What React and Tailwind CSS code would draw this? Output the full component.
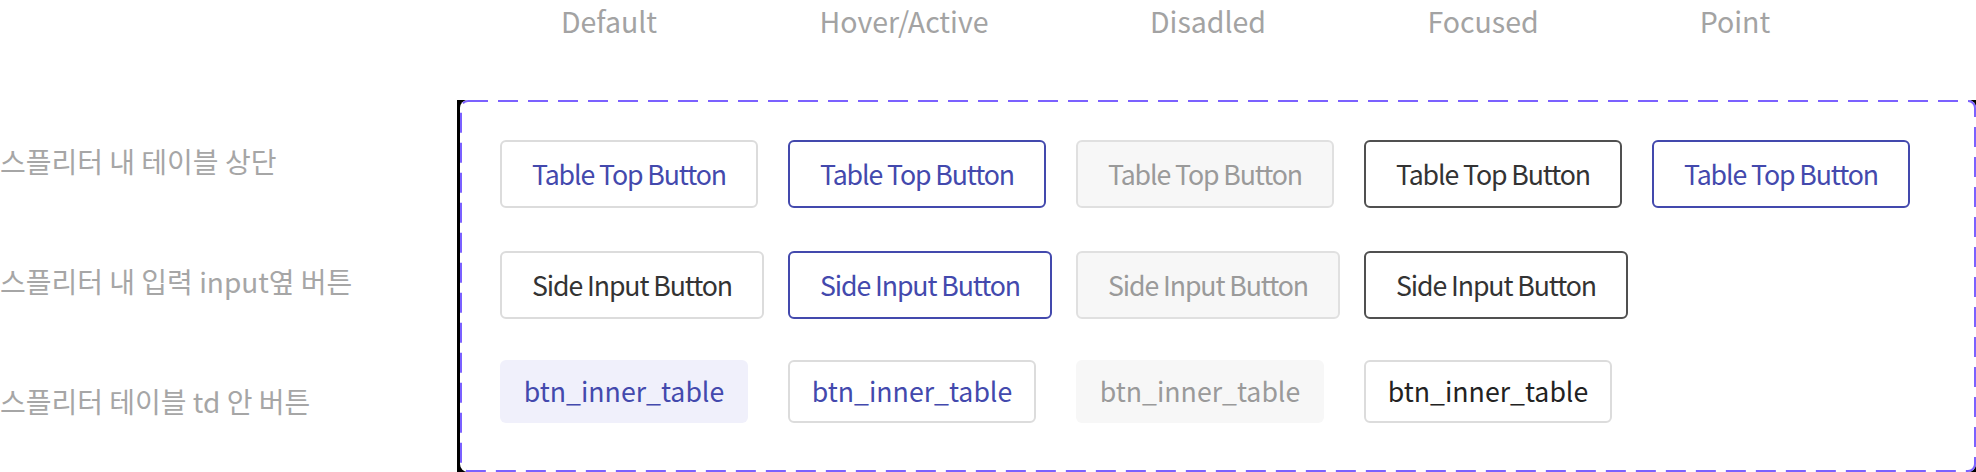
import React from "react";

const BLUE = "text-[#4349ad]";

function Btn({ w, h, cls, track, children }) {
  return (
    <div
      className={`${w} ${h} ${cls} ${track} rounded-[6px] flex items-center justify-center text-[26.7px] leading-none whitespace-nowrap`}
    >
      {children}
    </div>
  );
}

function Cell({ children }) {
  return <div className="w-[288px] shrink-0">{children}</div>;
}

export default function App() {
  const r1 = "w-[258px]";
  const r2 = "w-[264px]";
  const r3 = "w-[248px]";
  const t = "tracking-[-1.1px]";
  return (
    <div className="w-[1976px] h-[472px] bg-white overflow-hidden font-['Noto_Sans_CJK_KR','Noto_Sans',sans-serif]">
      <div className="h-[100px] flex text-[28.5px] leading-normal text-[#a3a3a3]">
        <div className="ml-[509px] w-[200px] text-center">Default</div>
        <div className="ml-[95px] w-[200px] text-center">Hover/Active</div>
        <div className="ml-[104px] w-[200px] text-center">Disadled</div>
        <div className="ml-[75px] w-[200px] text-center">Focused</div>
        <div className="ml-[52px] w-[200px] text-center">Point</div>
      </div>
      <div className="flex">
        <div className="w-[457px] shrink-0 flex flex-col pt-[1px] text-[28px] leading-none text-[#a6a6a6]">
          <div className="h-[120px] flex items-center">스플리터 내 테이블 상단</div>
          <div className="h-[120px] flex items-center">스플리터 내 입력 input옆 버튼</div>
          <div className="h-[120px] flex items-center">스플리터 테이블 td 안 버튼</div>
        </div>
        <div className="w-[1519px] h-[372px] shrink-0 bg-black pl-[3px]">
          <div className="relative h-full bg-white rounded-[8px] pl-[40px] pt-[40px] flex flex-col">
            <svg className="absolute inset-0 w-full h-full pointer-events-none" aria-hidden="true">
              <rect
                x="1"
                y="1"
                rx="7"
                className="[width:calc(100%_-_2px)] [height:calc(100%_-_2px)]"
                fill="none"
                stroke="#7B61FF"
                strokeWidth="2"
                strokeDasharray="20 10"
              />
            </svg>
            <div className="flex">
              <Cell><Btn w={r1} h="h-[68px]" track={t} cls={`border-2 border-[#dcdcdc] bg-white ${BLUE}`}>Table Top Button</Btn></Cell>
              <Cell><Btn w={r1} h="h-[68px]" track={t} cls={`border-2 border-[#4349ad] bg-white ${BLUE}`}>Table Top Button</Btn></Cell>
              <Cell><Btn w={r1} h="h-[68px]" track={t} cls="border-2 border-[#e0e0e0] bg-[#f7f7f7] text-[#9a9a9a]">Table Top Button</Btn></Cell>
              <Cell><Btn w={r1} h="h-[68px]" track={t} cls="border-2 border-[#505050] bg-white text-[#333333]">Table Top Button</Btn></Cell>
              <Cell><Btn w={r1} h="h-[68px]" track={t} cls={`border-2 border-[#4349ad] bg-white ${BLUE}`}>Table Top Button</Btn></Cell>
            </div>
            <div className="flex mt-[43px]">
              <Cell><Btn w={r2} h="h-[68px]" track={t} cls="border-2 border-[#dcdcdc] bg-white text-[#333333]">Side Input Button</Btn></Cell>
              <Cell><Btn w={r2} h="h-[68px]" track={t} cls={`border-2 border-[#4349ad] bg-white ${BLUE}`}>Side Input Button</Btn></Cell>
              <Cell><Btn w={r2} h="h-[68px]" track={t} cls="border-2 border-[#e0e0e0] bg-[#f7f7f7] text-[#9a9a9a]">Side Input Button</Btn></Cell>
              <Cell><Btn w={r2} h="h-[68px]" track={t} cls="border-2 border-[#505050] bg-white text-[#333333]">Side Input Button</Btn></Cell>
            </div>
            <div className="flex mt-[41px]">
              <Cell><Btn w={r3} h="h-[63px]" track="tracking-normal" cls={`bg-[#f0f0fb] ${BLUE}`}>btn_inner_table</Btn></Cell>
              <Cell><Btn w={r3} h="h-[63px]" track="tracking-normal" cls={`border-2 border-[#dcdcdc] bg-white ${BLUE}`}>btn_inner_table</Btn></Cell>
              <Cell><Btn w={r3} h="h-[63px]" track="tracking-normal" cls="bg-[#f7f7f7] text-[#9a9a9a]">btn_inner_table</Btn></Cell>
              <Cell><Btn w={r3} h="h-[63px]" track="tracking-normal" cls="border-2 border-[#dcdcdc] bg-white text-[#222222]">btn_inner_table</Btn></Cell>
            </div>
          </div>
        </div>
      </div>
    </div>
  );
}
